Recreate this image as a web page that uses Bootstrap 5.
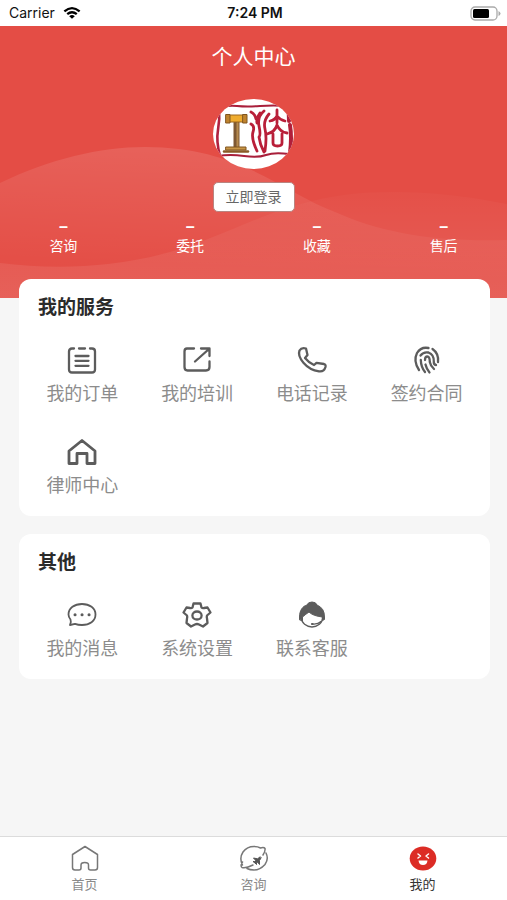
<!DOCTYPE html>
<html lang="zh-CN">
<head>
<meta charset="utf-8">
<meta name="viewport" content="width=device-width, initial-scale=1">
<title>个人中心</title>
<link href="https://cdn.jsdelivr.net/npm/bootstrap@5.3.0/dist/css/bootstrap.min.css" rel="stylesheet">
<style>
  body { font-family: "Noto Sans", "Noto Sans CJK SC", sans-serif; background: #f6f6f6; color: #333; }
  svg { display: block; flex: none; }
  .statusbar { height: 26px; padding: 0 6px 0 9px; background: #fff; color: #111; font-family: Inter, sans-serif; font-size: 14px; line-height: 26px; }
  .side { flex: 1 1 0; }
  .hero { background: #e44d45; color: #fff; padding-bottom: 42px; }
  .waves { z-index: 0; }
  .hero-body { z-index: 1; }
  .page-title { font-size: 21px; line-height: 28px; font-weight: 400; margin: 16px 0 29px; }
  .btn-login { --bs-btn-font-size: 14px; --bs-btn-line-height: 20px; --bs-btn-padding-x: 12px; --bs-btn-padding-y: 4px; --bs-btn-border-radius: 5px;
    --bs-btn-bg: #fff; --bs-btn-color: #666; --bs-btn-border-color: #b98480; --bs-btn-hover-bg: #f6f6f6; --bs-btn-hover-color: #444; margin-top: 13px; }
  .stats { margin-top: 6px; }
  .stat { color: #fff; font-size: 14px; line-height: 20px; text-decoration: none; text-align: center; }
  .stat b { display: block; font: 700 16px/18px "Liberation Sans", sans-serif; }
  .panels { margin-top: -19px; padding: 0 17px 0 19px; gap: 18px; z-index: 2; }
  .panel { --bs-card-border-width: 0; --bs-card-border-radius: 12px; padding: 14px 6px 0; }
  .panel h2 { font-size: 19px; line-height: 28px; font-weight: 700; color: #2b2b2b; margin: 0 0 11px; padding-left: 13px; }
  .tile { padding: 12px 0 17px; gap: 3px; font-size: 18px; line-height: 28px; color: #8c8c8c; text-decoration: none; }
  .tile svg, .tab svg { fill: none; stroke-linecap: round; stroke-linejoin: round; }
  .tile svg { stroke: #5c5c5c; stroke-width: 2.3; }
  .tabs { background: #fff; border-top: 1px solid #dcdcdc; padding: 6px 0; }
  .tab { color: #8a8a8a; font-size: 13px; line-height: 20px; text-decoration: none; }
  .tab svg { stroke: #777; stroke-width: 1.5; }
  .tab.active { color: #333; }
</style>
<script src="https://cdn.jsdelivr.net/npm/bootstrap@5.3.0/dist/js/bootstrap.bundle.min.js"></script>
</head>
<body>
<div class="d-flex flex-column min-vh-100">
  <div class="statusbar d-flex align-items-center">
    <div class="side d-flex align-items-center gap-2">
      <span>Carrier</span>
      <svg width="18" height="14" viewBox="0 0 20 14" fill="none" stroke="#000" stroke-width="2.6"><path d="M1.500 5.200Q10-2 18.500 5.200M4.700 8.300Q10 4 15.300 8.300"/><path d="M6.900 10.500Q10 8 13.100 10.500L10 13.500Z" fill="#000" stroke="none"/></svg>
    </div>
    <span class="fw-semibold">7:24 PM</span>
    <div class="side d-flex justify-content-end">
      <svg width="31" height="15" viewBox="0 0 31 15"><rect x="1" y="1" width="26" height="13" rx="4" fill="#fff" stroke="#aaa" stroke-width="1.300"/><rect x="3" y="3" width="16" height="9" rx="1.500"/><path d="M28.500 5v5q2-1 2-2.500t-2-2.500Z" fill="#aaa"/></svg>
    </div>
  </div>

  <header class="hero position-relative">
    <svg class="waves position-absolute top-0 start-0 w-100 h-100" viewBox="0 0 507 272" preserveAspectRatio="none">
      <defs>
        <linearGradient id="w1" x1=".5" y1="0" x2=".35" y2="1"><stop offset="0" stop-color="#fff" stop-opacity=".12"/><stop offset=".8" stop-color="#fff" stop-opacity=".01"/></linearGradient>
        <linearGradient id="w2" x1="0" y1="0" x2="0" y2="1"><stop offset="0" stop-color="#fff" stop-opacity=".02"/><stop offset="1" stop-color="#fff" stop-opacity=".1"/></linearGradient>
      </defs>
      <path fill="url(#w1)" d="M0 157C50 133 100 121 145 121C240 121 280 165 335 186C380 206 430 216 507 214V272H0Z"/>
      <path fill="url(#w2)" d="M0 237C50 243 110 243 170 226C240 206 290 166 390 166C440 166 475 172 507 178V272H0Z"/>
    </svg>
    <div class="hero-body position-relative d-flex flex-column align-items-center">
      <h1 class="page-title">个人中心</h1>
      <svg width="81" height="70" viewBox="0 0 81 70" fill="none" stroke-linecap="round" stroke-linejoin="round">
        <defs><clipPath id="face"><ellipse cx="40.500" cy="35" rx="40.500" ry="35"/></clipPath></defs>
        <g clip-path="url(#face)">
          <rect width="81" height="70" fill="#fff"/>
          <path d="M5 9Q14 6 24 7T47 7T75 7M5 57Q17 55 31 57T53 56T76 55" stroke="#a91f3b" stroke-width="2"/>
          <path d="M6 9Q7 20 5 31T7 57" stroke="#b12340" stroke-width="2.600"/>
          <path d="M75 7Q76 14 76 22M77 26Q79 38 77 54" stroke="#b21f39" stroke-width="4"/>
          <path d="M38 13Q42 15 43 20M38 25Q42 27 40 33T44 52M51 12Q44 18 46 27T46 38Q47 46 51 53M47 14Q43 20 44 24M56 15Q50 22 52 30T52 52" stroke="#b91f39" stroke-width="2.800"/>
          <path d="M64 11V24M57 22Q62 21 64 17Q67 21 72 22M54 35Q62 33 64 26Q67 33 74 34M60 35V44Q60 47 64.500 47T69 44V35" stroke="#b91f39" stroke-width="2.800"/>
          <path d="M23.500 23V49" stroke="#7e5833" stroke-width="6" stroke-linecap="butt"/>
          <path d="M24.500 24V49" stroke="#b68a4e" stroke-width="2"/>
          <path d="M16 16H31V23H16Z" fill="#efac2e" stroke="#9c671f"/>
          <path d="M13 15.500H17V24H13ZM30 15.500H34V24H30Z" fill="#bf832d" stroke="#80551f"/>
          <path d="M13 48H33V51H13Z" fill="#c89647" stroke="#80551f"/>
          <path d="M11 52.500H35" stroke="#8a5b27" stroke-width="2.500"/>
        </g>
      </svg>
      <button type="button" class="btn btn-login">立即登录</button>
      <nav class="stats row row-cols-4 g-0 w-100" aria-label="统计">
        <a class="stat col" href="#"><b>–</b>咨询</a>
        <a class="stat col" href="#"><b>–</b>委托</a>
        <a class="stat col" href="#"><b>–</b>收藏</a>
        <a class="stat col" href="#"><b>–</b>售后</a>
      </nav>
    </div>
  </header>

  <main class="panels position-relative d-flex flex-column">
    <section class="panel card">
      <h2>我的服务</h2>
      <div class="row row-cols-4 g-0">
        <a class="tile col d-flex flex-column align-items-center" href="#">
          <svg width="32" height="32" viewBox="0 0 32 32"><path d="M8 4.500H6Q3 4.500 3 7.500V25.500Q3 28.500 6 28.500H26Q29 28.500 29 25.500V7.500Q29 4.500 26 4.500H24M13 4.500H19M9.500 12H22.500M9.500 16.800H22.500M9.500 21.800H22.500"/></svg>我的订单</a>
        <a class="tile col d-flex flex-column align-items-center" href="#">
          <svg width="32" height="32" viewBox="0 0 32 32"><path d="M13 4.500H6Q3.500 4.500 3.500 7.500V23Q3.500 26.500 6.500 26.500H25Q28.500 26.500 28.500 23V17.500M20 4.500H28.500V12M28 5L14 17.500"/></svg>我的培训</a>
        <a class="tile col d-flex flex-column align-items-center" href="#">
          <svg width="32" height="32" viewBox="0 0 32 32"><path d="M3.500 6.500Q5.500 3.200 10 4.500L11.500 11L9 14Q13 19 18 21L20.500 18.800L28 20Q30 20.500 29.500 23Q28 28 23 27.300C10 25.500 1 13 3.500 6.500Z"/></svg>电话记录</a>
        <a class="tile col d-flex flex-column align-items-center" href="#">
          <svg width="32" height="32" viewBox="0 0 32 32"><path d="M8 26Q2 17 6 9Q10 2.500 17.500 4M21.500 5Q28 9.500 27 18M9.500 11.500Q12.500 7.500 17.500 8.500Q23 10.500 22.800 17.500Q22.500 20.500 25 21M9.800 16Q10 23 14 28M14 16Q14 12.500 16.300 12.500Q18.800 12.500 18.800 18Q19.500 22 23 25M14.500 20.500Q15.500 25 18.500 28.500"/></svg>签约合同</a>
        <a class="tile col d-flex flex-column align-items-center" href="#">
          <svg width="32" height="32" viewBox="0 0 32 32"><path stroke-width="2.800" d="M16 4.500L3 15V27.500H11V17.500H21V27.500H29V15Z"/></svg>律师中心</a>
      </div>
    </section>
    <section class="panel card">
      <h2>其他</h2>
      <div class="row row-cols-4 g-0">
        <a class="tile col d-flex flex-column align-items-center" href="#">
          <svg width="32" height="32" viewBox="0 0 32 32"><path stroke-width="1.800" d="M4.500 20.500Q2.500 18 2.500 15.500C2.500 9 8.500 5 16 5S29.500 9 29.500 15.500S23.500 26 16 26Q12 26 9 24.800L4 26Q5.500 23 4.500 20.500Z"/><path stroke-width="3" d="M9 15.700h.1M16 15.700h.1M23 15.700h.1"/></svg>我的消息</a>
        <a class="tile col d-flex flex-column align-items-center" href="#">
          <svg width="32" height="32" viewBox="0 0 32 32"><path d="M12.500 4.500H19.500L20.500 8.500Q21.500 9.500 23 9L26.500 8.500L29.500 13.500L26 16.500Q25.500 18 26 19.500L26.500 24L22 27.500L18 25.500Q16 24.500 14 25.500L10 27.500L5.500 24L6 19.500Q6.500 18 6 16.500L2.500 13.500L5.500 8.500L9 9Q10.500 9.500 11.500 8.500Z"/><ellipse cx="16" cy="16.500" rx="4.600" ry="4"/></svg>系统设置</a>
        <a class="tile col d-flex flex-column align-items-center" href="#">
          <svg width="32" height="32" viewBox="0 0 32 32"><ellipse cx="16" cy="19" rx="10.500" ry="9" stroke-width="1.300"/><path fill="#5c5c5c" stroke-width="1" d="M3.500 20.500V18C3.500 11 7 7 11 6Q12 3 16 3T21 6Q28.500 9 28.500 18V20.500L26.500 21.500V18Q17 17 13 13Q10 15 6.500 18V21.500Z"/><path stroke-width="1.300" d="M16.500 25Q22 25.500 25 22.500"/><path stroke-width="2.200" d="M16 25h.5"/></svg>联系客服</a>
      </div>
    </section>
  </main>

  <nav class="tabs row row-cols-3 g-0 mt-auto" aria-label="主导航">
    <a class="tab col d-flex flex-column align-items-center" href="#">
      <svg width="32" height="31" viewBox="0 0 32 31"><path d="M16 3.500L3.500 11.500V24.500Q3.500 27 6 27H10Q12 27 12 25V22Q12 19.500 15.800 19.500T19.500 22V25Q19.500 27 21.500 27H26Q28.500 27 28.500 24.500V11.500Z"/></svg>首页</a>
    <a class="tab col d-flex flex-column align-items-center" href="#">
      <svg width="32" height="31" viewBox="0 0 32 31"><path d="M4.500 22Q1 15 5 9Q9 3.500 16 3.500Q20 3.500 22.500 5Q26 4 27 5.500Q27.500 8 25 12M4.500 19Q2 23 4 24.500Q8 25.500 15 22M28 10Q31 16 27 21.500Q22 27 16 27Q12 27 9 25.500"/><path fill="#555" stroke="#555" stroke-width="1" d="M22 14L19.500 15.800L15.500 15L17.800 17.500L16.500 18.500L15 18.500L17 20L18.500 21.500V20L19.500 19L21.500 21.500V17.500L23 15Z"/></svg>咨询</a>
    <a class="tab active col d-flex flex-column align-items-center" href="#" aria-current="page">
      <svg width="32" height="31" viewBox="0 0 32 31"><ellipse cx="16" cy="15.500" rx="13.300" ry="12" fill="#dc2c25" stroke="none"/><path stroke="#fff" d="M11 11L13.500 13L11 15M21.500 11L19 13L21.500 15"/><path fill="#fff" stroke="none" d="M11.500 17.500H20.500Q20 22 16 22T11.500 17.500Z"/></svg>我的</a>
  </nav>
</div>
</body>
</html>
